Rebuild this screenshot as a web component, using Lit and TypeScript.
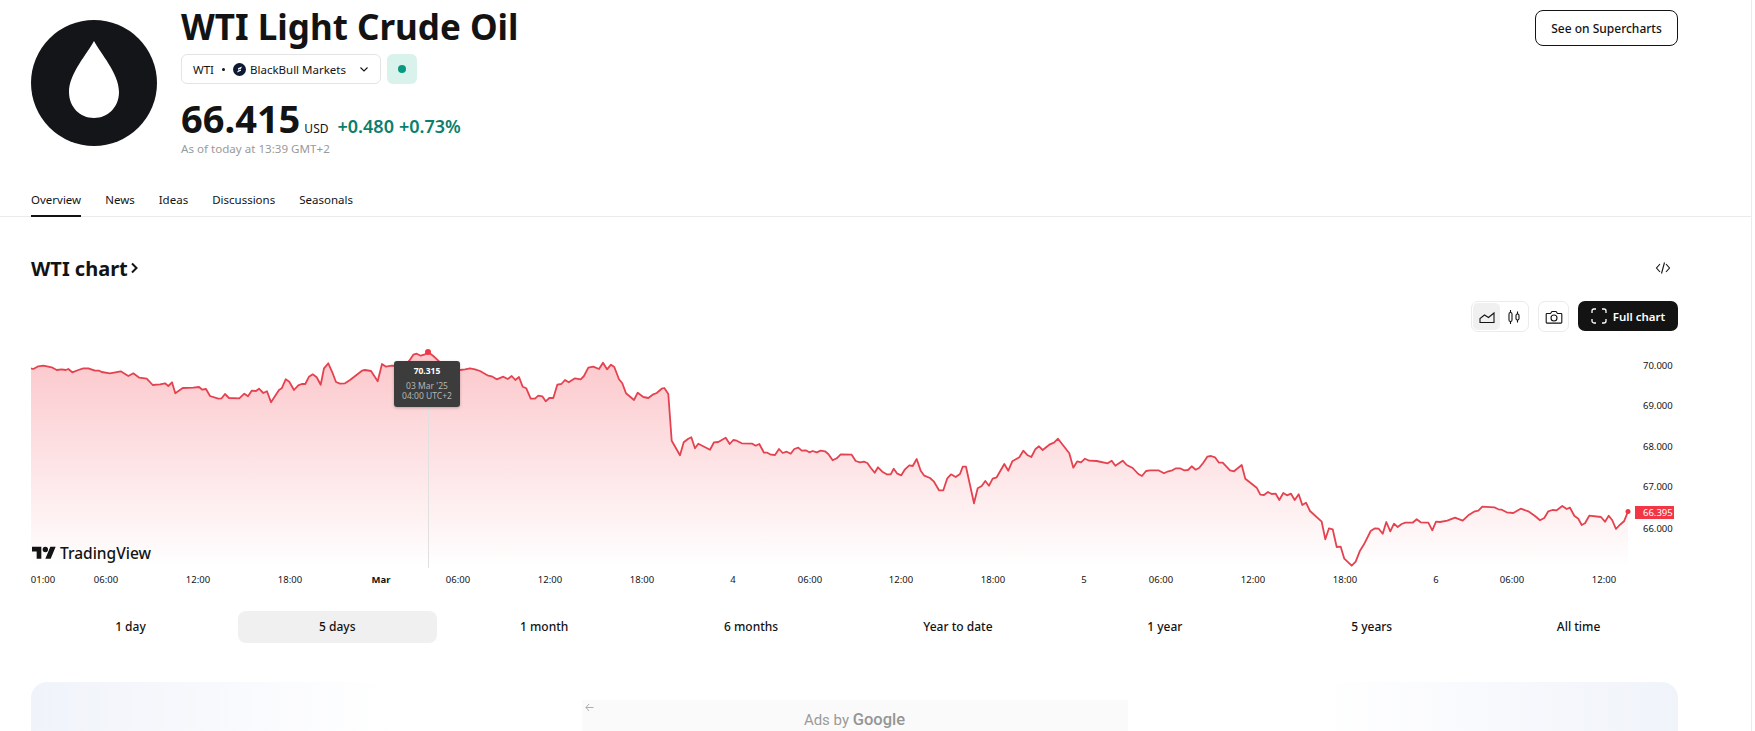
import { LitElement, html, css, svg } from 'lit';
import { customElement } from 'lit/decorators.js';

// line traced in crop coordinates: [x0, y0, scale, points...]
const traces: [number, number, number[]][] = [
  [0, 340, [93,85,100,87,115,79,130,77,155,82,170,90,185,88,197,90,205,87,217,97,235,90,250,85,265,85,285,92,298,92,305,96,330,100,362,94,385,108,400,100,418,113,440,116,458,135,480,133,495,130,505,138,516,127,526,160,548,144,580,143,597,141,607,149,618,147,630,168,655,176,665,175,675,162,687,174,718,175,733,161,744,169,755,152,768,153,777,146,790,159,801,154,813,187,837,150,845,145,857,118,868,125,882,150,895,136,905,132,916,132,927,110,938,103,950,112,962,134,972,85,985,70,997,97,1008,126,1020,131,1035,130,1050,120,1086,92,1095,90,1113,93,1133,124,1146,72,1158,80,1175,77,1195,78,1215,75,1228,62,1240,44,1250,41,1262,47,1275,43,1285,37,1300,48,1315,62,1330,75,1350,80,1380,90,1395,88,1410,85,1425,88]],
  [480, 340, [0,93,25,107,35,109,50,118,70,110,83,117,95,108,106,120,117,111,128,140,139,145,152,176,165,176,175,167,187,169,197,184,208,174,220,174,232,134,244,132,255,120,266,127,285,115,302,118,312,108,325,83,340,80,357,87,369,68,381,88,393,74,403,81,417,118,427,130,438,160,462,180,473,158,490,171,505,174,520,163,530,159,545,146,553,144,565,162,575,302,600,346,611,307,625,296,634,292,645,325,655,311,690,329,702,307,715,306,737,293,749,312,760,300,770,302,785,310,817,311,827,317,838,312,852,338,862,338,873,344,885,345,897,327,908,339,920,335,932,341,943,327,955,323,965,332,977,331,988,337,998,333,1010,337,1022,332,1035,334,1045,342,1058,361,1070,355,1082,343,1115,344,1127,363,1140,367,1152,365,1162,369,1172,383,1184,398,1194,382,1207,395,1220,403,1232,403,1241,386,1252,401,1264,406,1275,388,1288,376,1298,378,1310,357,1322,392,1333,407,1350,414,1362,425,1377,451,1390,451,1402,415,1413,403,1427,411]],
  [960, 400, [0,222,8,200,18,200,42,310,53,265,65,258,76,243,87,257,98,236,110,232,133,192,145,212,157,184,178,172,190,152,203,166,214,171,226,148,237,139,248,150,268,134,282,128,294,116,328,160,340,203,352,184,363,187,375,176,388,182,410,183,443,190,455,182,466,197,488,182,500,195,518,204,535,222,546,228,558,213,570,211,595,211,612,220,625,214,637,211,648,205,660,205,672,211,684,210,695,199,707,209,718,203,730,188,742,170,753,168,765,172,777,188,788,188,810,211,822,214,845,195,856,236,890,263,901,284,912,285,924,276,935,282,947,281,958,300,970,279,981,286,993,281,1004,300,1016,283,1027,315,1038,308,1050,333,1085,365,1096,418,1107,385,1118,388,1130,441,1142,440,1153,476,1175,497,1187,485,1200,452,1212,433,1232,393,1245,385,1256,386,1268,401,1279,366,1291,394,1302,371,1313,381,1325,372,1336,368,1358,368,1370,358,1382,367,1405,368,1417,391,1428,365]],
  [1400, 440, [120,246,142,242,165,233,188,242,205,226,222,215,235,212,247,200,283,202,295,208,305,209,320,217,340,219,362,206,385,214,405,228,420,241,433,234,445,214,457,210,470,211,487,198,500,207,510,203,523,227,535,236,545,255,555,250,568,227,603,231,615,245,626,227,637,241,648,267,660,254,672,244,684,215]],
];

const linePoints = traces
  .flatMap(([x0, y0, pts]) => {
    const out: string[] = [];
    for (let i = 0; i < pts.length; i += 2) {
      out.push(`${(x0 + pts[i] / 3).toFixed(1)},${(y0 + pts[i + 1] / 3).toFixed(1)}`);
    }
    return out;
  })
  .join(' ');
const areaPoints = `31,568 ${linePoints} 1628,568`;

const priceLabels: [string, number][] = [
  ['70.000', 365],
  ['69.000', 405.5],
  ['68.000', 446],
  ['67.000', 486.5],
  ['66.000', 528],
];

const timeLabels: [string, number, boolean?][] = [
  ['01:00', 43], ['06:00', 106], ['12:00', 198], ['18:00', 290], ['Mar', 381, true],
  ['06:00', 458], ['12:00', 550], ['18:00', 642], ['4', 733], ['06:00', 810],
  ['12:00', 901], ['18:00', 993], ['5', 1084], ['06:00', 1161], ['12:00', 1253],
  ['18:00', 1345], ['6', 1436], ['06:00', 1512], ['12:00', 1604],
];

const ranges = ['1 day', '5 days', '1 month', '6 months', 'Year to date', '1 year', '5 years', 'All time'];
const tabs = ['Overview', 'News', 'Ideas', 'Discussions', 'Seasonals'];

@customElement('app-root')
export class AppRoot extends LitElement {
  static styles = css`
    :host {
      display: block;
      height: 731px;
      overflow: hidden;
      background: #fff;
      color: #131313;
      font-family: 'Noto Sans', sans-serif;
    }
    .page {
      width: 1752px;
      height: 731px;
      box-sizing: border-box;
      border-right: 1px solid #ebebeb;
      overflow: hidden;
    }
    .header {
      display: flex;
      height: 170px;
      padding: 0 73px 0 31px;
      box-sizing: border-box;
    }
    .logo {
      width: 126px;
      height: 126px;
      margin-top: 20px;
      flex: none;
    }
    .info {
      margin-left: 24px;
      flex: 1;
    }
    h1 {
      margin: 0;
      font-size: 35px;
      line-height: 54px;
      font-weight: 700;
      white-space: nowrap;
    }
    .chips {
      display: flex;
      gap: 6px;
      height: 30px;
    }
    .chip {
      width: 200px;
      box-sizing: border-box;
      display: flex;
      align-items: center;
      padding: 0 11px;
      border: 1px solid #e4e4e4;
      border-radius: 6px;
      font-size: 11.5px;
      white-space: nowrap;
    }
    .sep {
      width: 3px;
      height: 3px;
      border-radius: 50%;
      background: #131313;
      margin: 0 8px;
    }
    .broker {
      width: 13px;
      height: 13px;
      margin-right: 4px;
      flex: none;
    }
    .chevron {
      width: 10px;
      height: 10px;
      margin-left: auto;
      flex: none;
    }
    .status {
      width: 30px;
      height: 30px;
      border-radius: 6px;
      background: #daf2ec;
      display: flex;
      align-items: center;
      justify-content: center;
    }
    .status i {
      width: 8px;
      height: 8px;
      border-radius: 50%;
      background: #089981;
    }
    .quote {
      display: flex;
      align-items: baseline;
      margin-top: 11px;
      height: 46px;
      white-space: nowrap;
    }
    .price {
      font-size: 38px;
      line-height: 46px;
      font-weight: 700;
    }
    .currency {
      font-size: 12px;
      margin-left: 4px;
    }
    .change {
      font-size: 18px;
      font-weight: 600;
      color: #0a7f6c;
      margin-left: 9px;
    }
    .change + .change {
      margin-left: 5px;
    }
    .asof {
      font-size: 11.6px;
      line-height: 16px;
      color: #9a9a9a;
    }
    .super {
      align-self: flex-start;
      margin-top: 10px;
      width: 143px;
      height: 36px;
      box-sizing: border-box;
      border: 1px solid #131313;
      border-radius: 8px;
      background: #fff;
      font: 500 12px 'Noto Sans', sans-serif;
      color: #131313;
      padding: 0;
    }
    nav {
      display: flex;
      gap: 24px;
      height: 47px;
      padding-left: 31px;
      box-sizing: border-box;
      border-bottom: 1px solid #ebebeb;
    }
    nav a {
      font-size: 11.5px;
      line-height: 60px;
      height: 47px;
      box-sizing: border-box;
    }
    nav a.on {
      border-bottom: 2px solid #131313;
    }
    .content {
      padding: 0 73px 0 31px;
    }
    .title-row {
      display: flex;
      align-items: center;
      justify-content: space-between;
      height: 38px;
      margin-top: 32px;
    }
    h2 {
      margin: 0;
      font-size: 20px;
      font-weight: 700;
      display: flex;
      align-items: center;
      gap: 2px;
    }
    h2 svg {
      width: 9px;
      height: 14px;
    }
    .embed {
      width: 16px;
      height: 16px;
      margin-right: 7px;
    }
    .tools {
      display: flex;
      justify-content: flex-end;
      height: 31px;
      margin-top: 14px;
    }
    .group {
      display: flex;
      align-items: center;
      box-sizing: border-box;
      height: 31px;
      padding: 1px;
      border: 1px solid #ebebeb;
      border-radius: 7px;
    }
    .cell {
      width: 27px;
      height: 27px;
      display: flex;
      align-items: center;
      justify-content: center;
      border-radius: 5px;
    }
    .cell.on {
      background: #f0f0f0;
    }
    .cell svg {
      width: 18px;
      height: 18px;
    }
    .camera {
      margin-left: 9px;
    }
    .full {
      display: flex;
      align-items: center;
      justify-content: center;
      gap: 6px;
      width: 100px;
      height: 30px;
      margin-left: 9px;
      border-radius: 7px;
      background: #131313;
      color: #fff;
      font-size: 11.5px;
      font-weight: 600;
    }
    .full svg {
      width: 16px;
      height: 16px;
    }
    .chart {
      position: relative;
      height: 250px;
      margin-top: 8px;
    }
    .chart > svg {
      display: block;
      width: 1647px;
      height: 250px;
      overflow: visible;
    }
    .axis {
      font-size: 9.5px;
      fill: #131313;
      font-family: 'Noto Sans', sans-serif;
    }
    .axis.bold {
      font-weight: 700;
    }
    .tag {
      font-size: 9.5px;
      fill: #fff;
      font-family: 'Noto Sans', sans-serif;
    }
    .tooltip {
      position: absolute;
      left: 363px;
      top: 21px;
      width: 66px;
      height: 46px;
      box-sizing: border-box;
      padding-top: 5px;
      border-radius: 3px;
      background: #3c3c3c;
      box-shadow: 0 1px 3px rgba(0, 0, 0, 0.25);
      text-align: center;
      font-size: 8.5px;
      line-height: 10px;
      color: #b4b4b4;
    }
    .tooltip b {
      display: block;
      color: #fff;
      font-weight: 700;
      margin-bottom: 5px;
    }
    .brand {
      position: absolute;
      left: 1px;
      top: 203px;
      display: flex;
      align-items: center;
      gap: 4px;
      font-size: 15.5px;
      font-weight: 500;
      line-height: 20px;
    }
    .brand svg {
      width: 24px;
      height: 19px;
    }
    .ranges {
      display: grid;
      grid-template-columns: repeat(8, 1fr);
      gap: 8px;
      margin-top: 21px;
    }
    .ranges div {
      height: 32px;
      line-height: 31px;
      border-radius: 8px;
      text-align: center;
      font-size: 12px;
      font-weight: 500;
    }
    .ranges .on {
      background: #f0f0f0;
    }
    .ad {
      height: 80px;
      margin-top: 39px;
      padding-top: 18px;
      box-sizing: border-box;
      border-radius: 16px 16px 0 0;
      background: linear-gradient(90deg, #f0f3fa 0%, #fff 22%, #fff 78%, #f0f3fa 100%);
    }
    .slot {
      position: relative;
      width: 546px;
      height: 62px;
      margin: 0 auto;
      background: #fafafa;
      text-align: center;
      color: #9b9b9b;
      font-family: 'Roboto', sans-serif;
      font-size: 15px;
      line-height: 40px;
    }
    .slot b {
      font-size: 16.5px;
      font-weight: 500;
      color: #959595;
    }
    .slot svg {
      position: absolute;
      left: 3px;
      top: 3px;
      width: 9px;
      height: 9px;
    }
  `;

  private renderChart() {
    return html`<svg viewBox="31 340 1647 250" aria-label="WTI price chart">
      <defs>
        <linearGradient id="fade" x1="0" y1="0" x2="0" y2="1">
          <stop offset="0" stop-color="#f23645" stop-opacity="0.28"></stop>
          <stop offset="1" stop-color="#f23645" stop-opacity="0"></stop>
        </linearGradient>
      </defs>
      <polygon points=${areaPoints} fill="url(#fade)"></polygon>
      <line x1="428.5" y1="400" x2="428.5" y2="568" stroke="#e0e0e0"></line>
      <polyline points=${linePoints} fill="none" stroke="#e5424f" stroke-width="1.8" stroke-linejoin="round"></polyline>
      <circle cx="428" cy="352" r="3" fill="#f23645"></circle>
      <circle cx="1628" cy="511.5" r="2.5" fill="#f23645"></circle>
      ${priceLabels.map(([label, y]) => svg`<text class="axis" x="1643" y=${y + 3.5}>${label}</text>`)}
      <rect x="1635" y="506" width="39" height="13" fill="#f23645"></rect>
      <text class="tag" x="1643" y="516">66.395</text>
      ${timeLabels.map(
        ([label, x, bold]) =>
          svg`<text class=${bold ? 'axis bold' : 'axis'} x=${x} y="582.5" text-anchor="middle">${label}</text>`
      )}
    </svg>`;
  }

  render() {
    return html`<div class="page">
      <header class="header">
        <svg class="logo" viewBox="0 0 126 126">
          <circle cx="63" cy="63" r="63" fill="#131518"></circle>
          <path d="M63 21C57 33 38 53 38 72c0 15 11 26 25 26s25-11 25-26C88 53 69 33 63 21Z" fill="#fff"></path>
        </svg>
        <div class="info">
          <h1>WTI Light Crude Oil</h1>
          <div class="chips">
            <div class="chip">
              WTI<span class="sep"></span>
              <svg class="broker" viewBox="0 0 13 13">
                <circle cx="6.5" cy="6.5" r="6.5" fill="#0e1a33"></circle>
                <path d="M9 3.6 5 5.2v1.6l3-1.1M4 9.4l4-1.6V6.4L5 7.5" fill="#fff"></path>
              </svg>
              BlackBull Markets
              <svg class="chevron" viewBox="0 0 10 10">
                <path d="M1.5 3.5 5 7l3.5-3.5" fill="none" stroke="#131313" stroke-width="1.1"></path>
              </svg>
            </div>
            <div class="status"><i></i></div>
          </div>
          <div class="quote">
            <span class="price">66.415</span>
            <span class="currency">USD</span>
            <span class="change">+0.480</span>
            <span class="change">+0.73%</span>
          </div>
          <div class="asof">As of today at 13:39 GMT+2</div>
        </div>
        <button class="super">See on Supercharts</button>
      </header>
      <nav>
        ${tabs.map((t, i) => html`<a class=${i === 0 ? 'on' : ''}>${t}</a>`)}
      </nav>
      <div class="content">
        <div class="title-row">
          <h2>
            WTI chart
            <svg viewBox="0 0 9 14">
              <path d="M2 2.5 6.5 7 2 11.5" fill="none" stroke="#131313" stroke-width="2"></path>
            </svg>
          </h2>
          <svg class="embed" viewBox="0 0 16 16">
            <path d="M5 4 1.5 8 5 12M11 4l3.5 4-3.5 4M9.5 2.5l-3 11" fill="none" stroke="#131313" stroke-width="1.1"></path>
          </svg>
        </div>
        <div class="tools">
          <div class="group">
            <div class="cell on">
              <svg viewBox="0 0 18 18">
                <path d="M2 14.5V10.5L6.5 7l4 2.5L16 5v9.5Z" fill="none" stroke="#131313" stroke-width="1.1"></path>
              </svg>
            </div>
            <div class="cell">
              <svg viewBox="0 0 18 18">
                <path d="M5.5 2v14M12.5 3.5v11" stroke="#131313" stroke-width="1.1"></path>
                <rect x="4" y="4.5" width="3" height="9" rx="1.4" fill="#fff" stroke="#131313" stroke-width="1.1"></rect>
                <rect x="11" y="6" width="3" height="6" rx="1.4" fill="#fff" stroke="#131313" stroke-width="1.1"></rect>
              </svg>
            </div>
          </div>
          <div class="group camera">
            <div class="cell">
              <svg viewBox="0 0 18 18">
                <path d="M2 5.5h3.5L7 3.5h4l1.5 2H16a.8.8 0 0 1 .8.8v8a.8.8 0 0 1-.8.8H2a.8.8 0 0 1-.8-.8v-8A.8.8 0 0 1 2 5.5Z" fill="none" stroke="#131313" stroke-width="1.1"></path>
                <circle cx="9" cy="10" r="3" fill="none" stroke="#131313" stroke-width="1.1"></circle>
              </svg>
            </div>
          </div>
          <div class="full">
            <svg viewBox="0 0 16 16">
              <path d="M1 5V3a2 2 0 0 1 2-2h2M11 1h2a2 2 0 0 1 2 2v2M15 11v2a2 2 0 0 1-2 2h-2M5 15H3a2 2 0 0 1-2-2v-2" fill="none" stroke="#fff" stroke-width="1.3"></path>
            </svg>
            Full chart
          </div>
        </div>
        <div class="chart">
          ${this.renderChart()}
          <div class="tooltip"><b>70.315</b>03 Mar '25<br />04:00 UTC+2</div>
          <div class="brand">
            <svg viewBox="0 0 36 28">
              <path d="M14 22H7V11H0V4h14v18ZM28 22h-8l7.5-18h8L28 22Z" fill="#131313"></path>
              <circle cx="20" cy="8" r="4" fill="#131313"></circle>
            </svg>
            TradingView
          </div>
        </div>
        <div class="ranges">
          ${ranges.map((r, i) => html`<div class=${i === 1 ? 'on' : ''}>${r}</div>`)}
        </div>
        <div class="ad">
          <div class="slot">
            <svg viewBox="0 0 9 9">
              <path d="M4 1 1 4.5 4 8M1 4.5h7.5" fill="none" stroke="#9b9b9b" stroke-width="0.8"></path>
            </svg>
            Ads by <b>Google</b>
          </div>
        </div>
      </div>
    </div>`;
  }
}
